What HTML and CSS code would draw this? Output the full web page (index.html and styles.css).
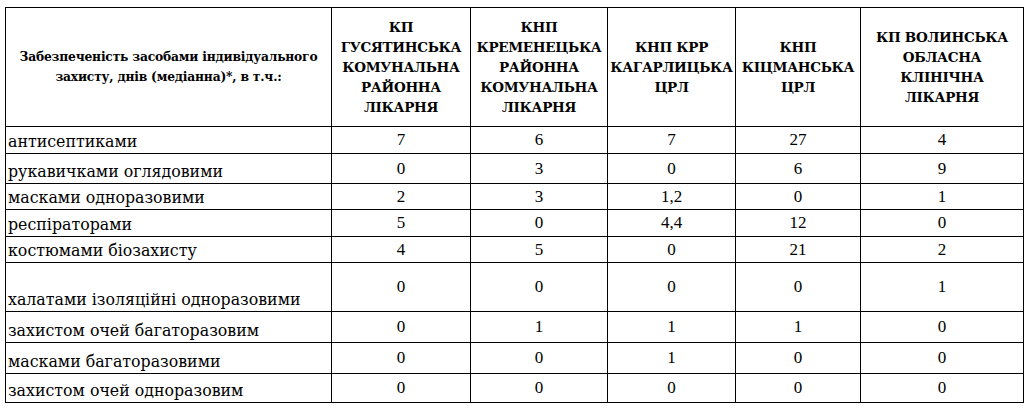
FILE: index.html
```html
<!DOCTYPE html>
<html lang="uk">
<head>
<meta charset="utf-8">
<title>Забезпеченість засобами індивідуального захисту</title>
<link rel="stylesheet" href="styles.css">
</head>
<body>
<div class="wrap">
<table class="ppe">
  <colgroup>
    <col class="c0"><col class="c1"><col class="c2"><col class="c3"><col class="c4"><col class="c5">
  </colgroup>
  <thead>
    <tr class="head">
      <th class="th-main">Забезпеченість засобами індивідуального<br>захисту, днів (медіанна)*, в т.ч.:</th>
      <th>КП<br>ГУСЯТИНСЬКА<br>КОМУНАЛЬНА<br>РАЙОННА<br>ЛІКАРНЯ</th>
      <th>КНП<br>КРЕМЕНЕЦЬКА<br>РАЙОННА<br>КОМУНАЛЬНА<br>ЛІКАРНЯ</th>
      <th>КНП КРР<br>КАГАРЛИЦЬКА<br>ЦРЛ</th>
      <th>КНП<br>КІЦМАНСЬКА<br>ЦРЛ</th>
      <th>КП ВОЛИНСЬКА<br>ОБЛАСНА<br>КЛІНІЧНА<br>ЛІКАРНЯ</th>
    </tr>
  </thead>
  <tbody>
    <tr class="r1"><td class="lbl">антисептиками</td><td>7</td><td>6</td><td>7</td><td>27</td><td>4</td></tr>
    <tr class="r2"><td class="lbl">рукавичками оглядовими</td><td>0</td><td>3</td><td>0</td><td>6</td><td>9</td></tr>
    <tr class="r3"><td class="lbl">масками одноразовими</td><td>2</td><td>3</td><td>1,2</td><td>0</td><td>1</td></tr>
    <tr class="r4"><td class="lbl">респіраторами</td><td>5</td><td>0</td><td>4,4</td><td>12</td><td>0</td></tr>
    <tr class="r5"><td class="lbl">костюмами біозахисту</td><td>4</td><td>5</td><td>0</td><td>21</td><td>2</td></tr>
    <tr class="r6"><td class="lbl">халатами ізоляційні одноразовими</td><td>0</td><td>0</td><td>0</td><td>0</td><td>1</td></tr>
    <tr class="r7"><td class="lbl">захистом очей багаторазовим</td><td>0</td><td>1</td><td>1</td><td>1</td><td>0</td></tr>
    <tr class="r8"><td class="lbl">масками багаторазовими</td><td>0</td><td>0</td><td>1</td><td>0</td><td>0</td></tr>
    <tr class="r9"><td class="lbl">захистом очей одноразовим</td><td>0</td><td>0</td><td>0</td><td>0</td><td>0</td></tr>
  </tbody>
</table>
</div>
</body>
</html>
```
FILE: styles.css
```css
html, body {
  margin: 0;
  padding: 0;
  background: #fff;
}
.wrap {
  padding: 7px 0 0 5px;
}
.ppe {
  border-collapse: collapse;
  table-layout: fixed;
  width: 1018px;
  font-family: "DejaVu Serif", "Liberation Serif", serif;
  color: #000;
}
.c0 { width: 326px; }
.c1 { width: 139px; }
.c2 { width: 137px; }
.c3 { width: 128px; }
.c4 { width: 125px; }
.c5 { width: 163px; }
.ppe th, .ppe td {
  border: 1px solid #000;
  padding: 0 2px;
}
.ppe th {
  font-weight: bold;
  font-size: 13.5px;
  line-height: 20px;
  text-align: center;
  vertical-align: middle;
  letter-spacing: -0.3px;
}
.ppe th.th-main {
  font-size: 12.3px;
  line-height: 20px;
  letter-spacing: -0.2px;
}
.head { height: 119px; }
.ppe td {
  font-family: "Liberation Serif", "DejaVu Serif", serif;
  font-size: 17px;
  text-align: center;
  vertical-align: middle;
  line-height: 20px;
}
.ppe td.lbl {
  font-family: "DejaVu Serif", "Liberation Serif", serif;
  font-size: 15.8px;
  text-align: left;
  vertical-align: bottom;
  padding-bottom: 1px;
}
.r1 { height: 27px; }
.r2 { height: 30px; }
.r3 { height: 26px; }
.r4 { height: 27px; }
.r5 { height: 26px; }
.r6 { height: 49px; }
.r7 { height: 31px; }
.r8 { height: 31px; }
.r9 { height: 29px; }
```
